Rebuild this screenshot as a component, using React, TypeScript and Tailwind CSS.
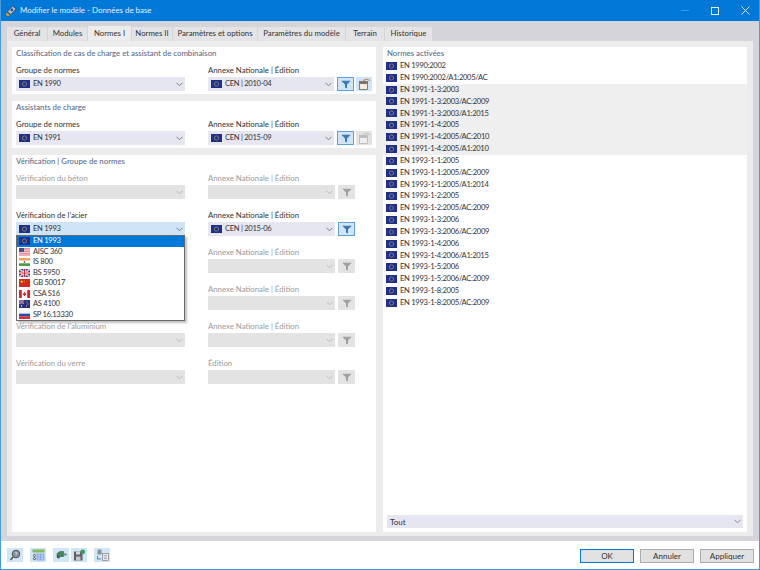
import React from "react";

type FlagName = "eu" | "us" | "in" | "gb" | "cn" | "ca" | "au" | "ru";

function Flag({ name }: { name: FlagName }) {
  const body: Record<FlagName, React.ReactNode> = {
    eu: (
      <>
        <rect width="11" height="8" fill="#1f2f8c" />
        <circle cx="5.5" cy="4" r="2.1" fill="none" stroke="#8f8f5a" strokeWidth="0.8" />
      </>
    ),
    us: (
      <>
        <rect width="11" height="8" fill="#e88d96" />
        <rect y="1.5" width="11" height="1" fill="#f6d5d8" />
        <rect y="4" width="11" height="1" fill="#f6d5d8" />
        <rect y="6.5" width="11" height="1" fill="#f6d5d8" />
        <rect width="5" height="4" fill="#4b4f86" />
      </>
    ),
    in: (
      <>
        <rect width="11" height="2.7" fill="#f0a050" />
        <rect y="2.7" width="11" height="2.6" fill="#ffffff" />
        <rect y="5.3" width="11" height="2.7" fill="#4f9a4a" />
        <circle cx="5.5" cy="4" r="0.9" fill="#5a6aa0" />
      </>
    ),
    gb: (
      <>
        <rect width="11" height="8" fill="#2f3f8a" />
        <path d="M0 0L11 8M11 0L0 8" stroke="#fff" strokeWidth="1.5" />
        <path d="M0 0L11 8M11 0L0 8" stroke="#d04050" strokeWidth="0.5" />
        <path d="M5.5 0V8M0 4H11" stroke="#fff" strokeWidth="2.2" />
        <path d="M5.5 0V8M0 4H11" stroke="#d02a3a" strokeWidth="1.1" />
      </>
    ),
    cn: (
      <>
        <rect width="11" height="8" fill="#d8281e" />
        <circle cx="2.7" cy="2.6" r="1.2" fill="#f2c52c" />
        <circle cx="5.2" cy="1.3" r="0.4" fill="#f2c52c" />
        <circle cx="5.8" cy="3" r="0.4" fill="#f2c52c" />
      </>
    ),
    ca: (
      <>
        <rect width="11" height="8" fill="#fff" />
        <rect width="2.8" height="8" fill="#e01f2a" />
        <rect x="8.2" width="2.8" height="8" fill="#e01f2a" />
        <path d="M5.5 1.5L6.5 3.5L7.3 3.2L7 5H6V6H5V5H4L3.7 3.2L4.5 3.5Z" fill="#e01f2a" />
      </>
    ),
    au: (
      <>
        <rect width="11" height="8" fill="#26307e" />
        <rect width="5" height="4" fill="#5a5f9a" />
        <path d="M0 0L5 4M5 0L0 4" stroke="#e0a0a8" strokeWidth="0.7" />
        <circle cx="8" cy="2" r="0.5" fill="#fff" />
        <circle cx="9" cy="4" r="0.5" fill="#fff" />
        <circle cx="7.5" cy="6" r="0.5" fill="#fff" />
        <circle cx="2.5" cy="6" r="0.7" fill="#fff" />
      </>
    ),
    ru: (
      <>
        <rect width="11" height="2.7" fill="#f4f4f4" />
        <rect y="2.7" width="11" height="2.6" fill="#2a46b0" />
        <rect y="5.3" width="11" height="2.7" fill="#dd2a2a" />
      </>
    ),
  };
  return (
    <svg width="11" height="8" viewBox="0 0 11 8" className="shrink-0">
      {body[name]}
    </svg>
  );
}

function Chevron({ color = "#7f7f86" }: { color?: string }) {
  return (
    <svg width="7" height="5" viewBox="0 0 7 5" className="shrink-0">
      <path d="M0.5 0.8L3.5 3.8L6.5 0.8" fill="none" stroke={color} strokeWidth="0.9" />
    </svg>
  );
}

function Funnel({ color }: { color: string }) {
  return (
    <svg width="10" height="9" viewBox="0 0 10 9">
      <path d="M0.3 0.8H9.7L6 4.4V8.6L4 7.4V4.4Z" fill={color} />
    </svg>
  );
}

function FilterBtn({ disabled = false }: { disabled?: boolean }) {
  return disabled ? (
    <div className="flex h-[14px] w-[17px] items-center justify-center bg-[#e3e3e3]">
      <Funnel color="#a0a0a0" />
    </div>
  ) : (
    <div className="flex h-[14px] w-[17px] items-center justify-center border border-[#5f9fd6] bg-[#cfe5f8]">
      <Funnel color="#3a79b8" />
    </div>
  );
}

function WindowBtn({ active }: { active: boolean }) {
  return (
    <div className={`flex h-[14px] w-[16px] items-center justify-center ${active ? "bg-[#cfe5f8]" : "bg-[#e3e3e3]"}`}>
      <svg width="13" height="12" viewBox="0 0 13 12">
        <rect x="1.5" y="3.5" width="8" height="8" fill={active ? "#f3ecdc" : "#efefef"} stroke={active ? "#6b655c" : "#b5b5b5"} strokeWidth="0.8" />
        <rect x="1.5" y="3.5" width="8" height="2.5" fill={active ? "#7c7469" : "#bcbcbc"} />
        <path d="M5 2.8L8.5 1L12 2.5" fill="none" stroke={active ? "#c98a4a" : "#c4c4c4"} strokeWidth="1.1" />
      </svg>
    </div>
  );
}

function Combo({
  flag,
  text,
  width,
  disabled = false,
  focus = false,
}: {
  flag?: FlagName;
  text?: string;
  width: string;
  disabled?: boolean;
  focus?: boolean;
}) {
  const bg = disabled ? "bg-[#e3e3e3]" : focus ? "bg-[#cfe4f7]" : "bg-[#e6e6f1]";
  return (
    <div className={`flex h-[14px] items-center justify-between pl-[3px] pr-[2px] ${width} ${bg}`}>
      <div className="flex items-center gap-[3px]">
        {flag && <Flag name={flag} />}
        {text && <span className="text-[7.6px] leading-none tracking-[-0.3px] text-[#333333]">{text}</span>}
      </div>
      <Chevron color={disabled ? "#b4b4b4" : "#6f6f78"} />
    </div>
  );
}

function Label({ text, disabled = false, width }: { text: string; disabled?: boolean; width: string }) {
  return (
    <div className={`flex h-[13px] items-center whitespace-nowrap text-[7.8px] leading-none ${width} ${disabled ? "text-[#9a9a9a]" : "text-[#333333]"}`}>
      {text}
    </div>
  );
}

function FieldRow({
  left,
  right = "Annexe Nationale | Édition",
  flag,
  text,
  flag2,
  text2,
  disabled = false,
  focus = false,
  extra,
  dropdown,
}: {
  left: string;
  right?: string;
  flag?: FlagName;
  text?: string;
  flag2?: FlagName;
  text2?: string;
  disabled?: boolean;
  focus?: boolean;
  extra?: React.ReactNode;
  dropdown?: React.ReactNode;
}) {
  return (
    <div>
      <div className="flex gap-[23px]">
        <Label text={left} disabled={disabled} width="w-[169px]" />
        <Label text={right} disabled={disabled} width="w-[127px]" />
      </div>
      <div className="flex items-center">
        <div className="relative mr-[23px]">
          <Combo flag={flag} text={text} width="w-[169px]" disabled={disabled} focus={focus} />
          {dropdown}
        </div>
        <Combo flag={flag2} text={text2} width="w-[127px]" disabled={disabled} />
        <div className="ml-[3px] flex gap-[2px]">
          <FilterBtn disabled={disabled} />
          {extra}
        </div>
      </div>
    </div>
  );
}

function SectionTitle({ text }: { text: string }) {
  return <div className="flex h-[13px] items-center whitespace-nowrap text-[7.8px] font-medium leading-none text-[#5b6b8c]">{text}</div>;
}

const ddItems: [FlagName, string][] = [
  ["eu", "EN 1993"],
  ["us", "AISC 360"],
  ["in", "IS 800"],
  ["gb", "BS 5950"],
  ["cn", "GB 50017"],
  ["ca", "CSA S16"],
  ["au", "AS 4100"],
  ["ru", "SP 16.13330"],
];

function Dropdown() {
  return (
    <div className="absolute left-0 top-[13px] z-10 w-[169px] border border-[#6a6a6a] bg-white shadow-[2px_2px_2px_rgba(0,0,0,0.25)]">
      {ddItems.map(([f, t], i) => (
        <div
          key={t}
          className={`flex h-[10.5px] items-center gap-[3px] pl-[2px] text-[7.6px] leading-none tracking-[-0.3px] ${
            i === 0 ? "bg-[#0078d7] text-white" : "text-[#333333]"
          }`}
        >
          <Flag name={f} />
          <span>{t}</span>
        </div>
      ))}
    </div>
  );
}

const norms: [string, boolean][] = [
  ["EN 1990:2002", false],
  ["EN 1990:2002/A1:2005/AC", false],
  ["EN 1991-1-3:2003", true],
  ["EN 1991-1-3:2003/AC:2009", true],
  ["EN 1991-1-3:2003/A1:2015", true],
  ["EN 1991-1-4:2005", true],
  ["EN 1991-1-4:2005/AC:2010", true],
  ["EN 1991-1-4:2005/A1:2010", true],
  ["EN 1993-1-1:2005", false],
  ["EN 1993-1-1:2005/AC:2009", false],
  ["EN 1993-1-1:2005/A1:2014", false],
  ["EN 1993-1-2:2005", false],
  ["EN 1993-1-2:2005/AC:2009", false],
  ["EN 1993-1-3:2006", false],
  ["EN 1993-1-3:2006/AC:2009", false],
  ["EN 1993-1-4:2006", false],
  ["EN 1993-1-4:2006/A1:2015", false],
  ["EN 1993-1-5:2006", false],
  ["EN 1993-1-5:2006/AC:2009", false],
  ["EN 1993-1-8:2005", false],
  ["EN 1993-1-8:2005/AC:2009", false],
];

const tabs: [string, string][] = [
  ["Général", "w-[40px]"],
  ["Modules", "w-[39px]"],
  ["Normes I", "w-[43px]"],
  ["Normes II", "w-[40px]"],
  ["Paramètres et options", "w-[84px]"],
  ["Paramètres du modèle", "w-[87px]"],
  ["Terrain", "w-[38px]"],
  ["Historique", "w-[47px]"],
];

function FootIcon({ children, className = "" }: { children: React.ReactNode; className?: string }) {
  return <div className={`flex h-[14px] w-[16px] items-center justify-center bg-[#cfe5f8] ${className}`}>{children}</div>;
}

function FootBtn({ text, primary = false }: { text: string; primary?: boolean }) {
  return (
    <div
      className={`flex h-[14px] w-[54px] items-center justify-center bg-[#e1e1e1] text-[8px] leading-none text-[#333333] border ${
        primary ? "border-[#0078d7]" : "border-[#adadad]"
      }`}
    >
      {text}
    </div>
  );
}

export default function App() {
  return (
    <div
      className="flex h-[570px] w-[760px] flex-col overflow-hidden border-x border-b border-[#4a9ae0] bg-white"
      style={{ fontFamily: "Lato, Roboto, sans-serif" }}
    >
      <div className="-mx-px flex h-[21px] shrink-0 items-center justify-between bg-[#0078d7] pl-[5px]">
        <div className="flex items-center gap-[3px]">
          <svg width="12" height="12" viewBox="0 0 12 12">
            <path d="M2.5 6.5L7.5 1.2L11 3.8L6 9.5Z" fill="#b9bdd0" stroke="#3c3f55" strokeWidth="0.7" />
            <path d="M1.5 7.5L5 10L3 11.6L0.8 10Z" fill="#e0b23c" stroke="#5a4a20" strokeWidth="0.4" />
            <circle cx="6.8" cy="5" r="1.4" fill="#3c4a80" />
          </svg>
          <span className="text-[7.9px] leading-none text-[#e4f0fa]">Modifier le modèle - Données de base</span>
        </div>
        <div className="flex items-center">
          <div className="flex w-[30px] justify-center">
            <div className="h-px w-[8px] bg-[#3f97df]" />
          </div>
          <div className="flex w-[30px] justify-center">
            <div className="h-[8px] w-[8px] border border-[#e4f0fa]" />
          </div>
          <div className="flex w-[30px] justify-center">
            <svg width="9" height="9" viewBox="0 0 9 9">
              <path d="M0.5 0.5L8.5 8.5M8.5 0.5L0.5 8.5" stroke="#e4f0fa" strokeWidth="0.9" />
            </svg>
          </div>
        </div>
      </div>

      <div className="flex h-[520px] shrink-0 flex-col bg-[#d5d5d9] px-[6px] pb-[5px]">
        <div className="flex h-[20px] shrink-0 items-end">
          {tabs.map(([t, w], i) => (
            <div
              key={t}
              className={`mr-px flex items-center justify-center whitespace-nowrap text-[7.8px] leading-none text-[#333333] ${w} ${
                i === 2 ? "h-[15px] bg-[#ececec]" : "h-[14px] bg-[#e4e4e6]"
              }`}
            >
              {t}
            </div>
          ))}
        </div>
        <div className="flex min-h-0 flex-1 gap-[7px] bg-[#ececec] px-[5px] pb-[4px] pt-[6px]">
          <div className="flex w-[364px] flex-col gap-[7px]">
            <div className="bg-white px-[4px] pb-[3px]">
              <SectionTitle text="Classification de cas de charge et assistant de combinaison" />
              <div className="mt-[4px]">
                <FieldRow left="Groupe de normes" flag="eu" text="EN 1990" flag2="eu" text2="CEN | 2010-04" extra={<WindowBtn active />} />
              </div>
            </div>
            <div className="bg-white px-[4px] pb-[3px]">
              <SectionTitle text="Assistants de charge" />
              <div className="mt-[4px]">
                <FieldRow left="Groupe de normes" flag="eu" text="EN 1991" flag2="eu" text2="CEN | 2015-09" extra={<WindowBtn active={false} />} />
              </div>
            </div>
            <div className="flex flex-1 flex-col bg-white px-[4px]">
              <SectionTitle text="Vérification | Groupe de normes" />
              <div className="mt-[4px] flex flex-col gap-[10px]">
                <FieldRow left="Vérification du béton" disabled />
                <FieldRow
                  left="Vérification de l'acier"
                  flag="eu"
                  text="EN 1993"
                  flag2="eu"
                  text2="CEN | 2015-06"
                  focus
                  dropdown={<Dropdown />}
                />
                <FieldRow left="" disabled />
                <FieldRow left="" disabled />
                <FieldRow left="Vérification de l'aluminium" disabled />
                <FieldRow left="Vérification du verre" right="Édition" disabled />
              </div>
            </div>
          </div>
          <div className="flex w-[364px] flex-col bg-white pb-[4px]">
            <div className="flex h-[13px] items-center px-[4px] text-[7.8px] font-medium leading-none text-[#5b6b8c]">Normes activées</div>
            <div className="flex-1">
              {norms.map(([n, grey]) => (
                <div
                  key={n}
                  className={`flex h-[11.85px] items-center gap-[3px] pl-[3px] text-[7.6px] leading-none tracking-[-0.3px] text-[#333333] ${grey ? "bg-[#efefef]" : ""}`}
                >
                  <Flag name="eu" />
                  <span>{n}</span>
                </div>
              ))}
            </div>
            <div className="mx-[4px] flex h-[13px] items-center justify-between bg-[#e6e6f1] pl-[3px] pr-[2.5px] text-[8px] leading-none text-[#333333]">
              <span>Tout</span>
              <Chevron />
            </div>
          </div>
        </div>
      </div>

      <div className="flex flex-1 items-start justify-between pl-[6px] pr-[5px] pt-[7px]">
        <div className="flex">
          <FootIcon className="mr-[7px]">
            <svg width="12" height="12" viewBox="0 0 12 12">
              <circle cx="7" cy="5" r="3.8" fill="#8a9498" stroke="#4a5054" strokeWidth="1" />
              <path d="M4 8L1.5 11" stroke="#4a5054" strokeWidth="1.4" />
              <path d="M5.8 4C6 2.8 8.4 3 8 4.6C7.7 5.4 7 5.2 7 6.2" fill="none" stroke="#e8eef2" strokeWidth="0.7" />
            </svg>
          </FootIcon>
          <FootIcon className="mr-[7px]">
            <svg width="13" height="12" viewBox="0 0 13 12">
              <rect x="0.5" y="0.5" width="12" height="3" fill="#84b85c" />
              <rect x="5" y="5" width="7" height="6" fill="#b4ccf0" stroke="#6a8ccc" strokeWidth="0.6" />
              <path d="M8.5 5V11M5 8H12" stroke="#6a8ccc" strokeWidth="0.5" />
              <circle cx="2.5" cy="6.5" r="1.1" fill="none" stroke="#444" strokeWidth="0.8" />
              <circle cx="2.5" cy="9.7" r="1.1" fill="none" stroke="#444" strokeWidth="0.8" />
            </svg>
          </FootIcon>
          <FootIcon className="mr-[2px]">
            <svg width="13" height="10" viewBox="0 0 13 10">
              <path d="M2 3.5L5 1.5H8.5V6.5H5L2 7.5Z" fill="#3d8a56" stroke="#2b4d36" strokeWidth="0.5" />
              <circle cx="3.5" cy="7" r="1.5" fill="#4f5a54" />
              <path d="M9.5 3L12 4.5L9.5 6Z" fill="#5b6660" />
            </svg>
          </FootIcon>
          <FootIcon className="mr-[7px]">
            <svg width="13" height="12" viewBox="0 0 13 12">
              <path d="M1 2.5H9.5V11.5H1Z" fill="#5d6064" />
              <rect x="3" y="2.5" width="4" height="3" fill="#d8dadd" />
              <rect x="3" y="7.5" width="4.5" height="4" fill="#c4c6ca" />
              <circle cx="9.7" cy="2.8" r="2.4" fill="#3f9a5a" />
            </svg>
          </FootIcon>
          <FootIcon>
            <svg width="13" height="12" viewBox="0 0 13 12">
              <rect x="1.5" y="0.5" width="4" height="5" rx="1" fill="#8b8f96" />
              <rect x="6.5" y="4.5" width="6" height="7" fill="#e8e8e8" stroke="#777" strokeWidth="0.6" />
              <path d="M8 6.5H11M8 8H11M8 9.5H11" stroke="#8a8a8a" strokeWidth="0.5" />
              <path d="M1.5 7V10H5" fill="none" stroke="#4a82c4" strokeWidth="0.9" />
            </svg>
          </FootIcon>
        </div>
        <div className="mt-px flex gap-[6px]">
          <FootBtn text="OK" primary />
          <FootBtn text="Annuler" />
          <FootBtn text="Appliquer" />
        </div>
      </div>
    </div>
  );
}
